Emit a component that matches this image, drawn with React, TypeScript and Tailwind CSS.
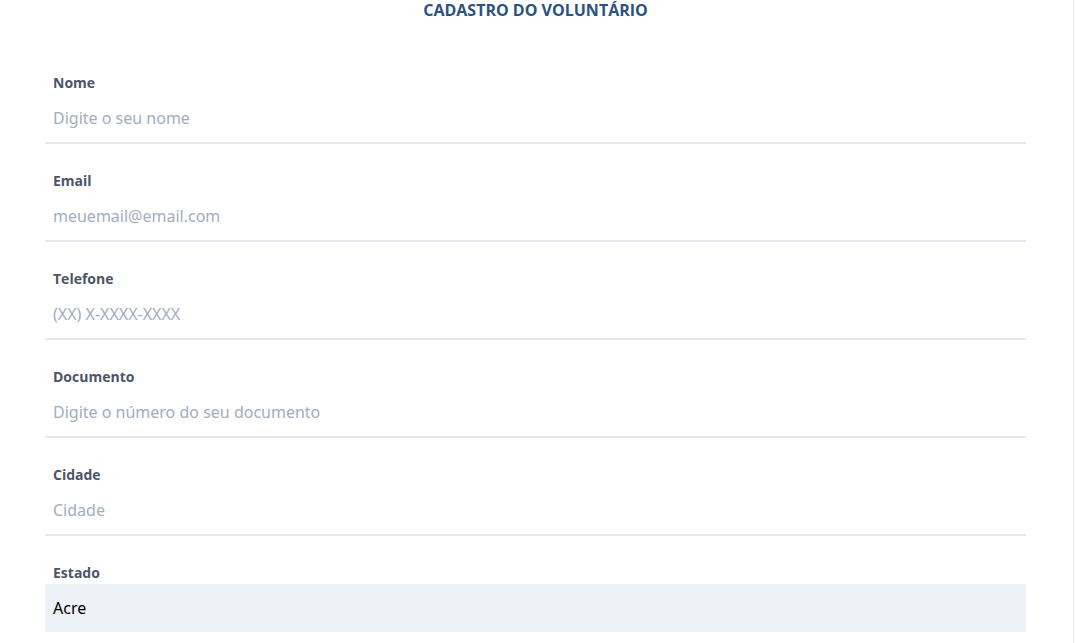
import React from "react";

const fields = [
  { label: "Nome", placeholder: "Digite o seu nome" },
  { label: "Email", placeholder: "meuemail@email.com" },
  { label: "Telefone", placeholder: "(XX) X-XXXX-XXXX" },
  { label: "Documento", placeholder: "Digite o número do seu documento" },
  { label: "Cidade", placeholder: "Cidade" },
];

export default function App() {
  return (
    <div
      className="flex w-[1075px] h-[643px] overflow-hidden bg-white"
      style={{ fontFamily: '"Open Sans", "Noto Sans", sans-serif' }}
    >
      <div className="w-[1071px] px-[45px]">
        <h1 className="text-center text-[16px] leading-[20px] font-bold text-[#2c5282] uppercase">
          Cadastro do Voluntário
        </h1>
        <form className="mt-[53px] flex flex-col gap-[27px]">
          {fields.map((f) => (
            <div key={f.label} className="flex flex-col">
              <label className="px-2 mb-[1px] text-[14px] leading-[20px] font-bold text-[#4a5568]">
                {f.label}
              </label>
              <input
                className="w-full px-2 py-3 text-[16px] leading-[24px] text-[#2d3748] placeholder:text-[#a0aec0] border-b-2 border-[#e2e8f0] outline-none bg-white font-['Noto_Sans',sans-serif]"
                placeholder={f.placeholder}
              />
            </div>
          ))}
          <div className="flex flex-col">
            <label className="px-2 mb-[1px] text-[14px] leading-[20px] font-bold text-[#4a5568]">
              Estado
            </label>
            <div className="w-full h-[48px] px-2 flex items-center bg-[#edf2f7] text-[16px] text-black font-['Noto_Sans',sans-serif]">
              Acre
            </div>
          </div>
        </form>
      </div>
      <div className="w-[2px]" />
      <div className="w-[1px] h-full bg-[#e2e8f0]" />
    </div>
  );
}
